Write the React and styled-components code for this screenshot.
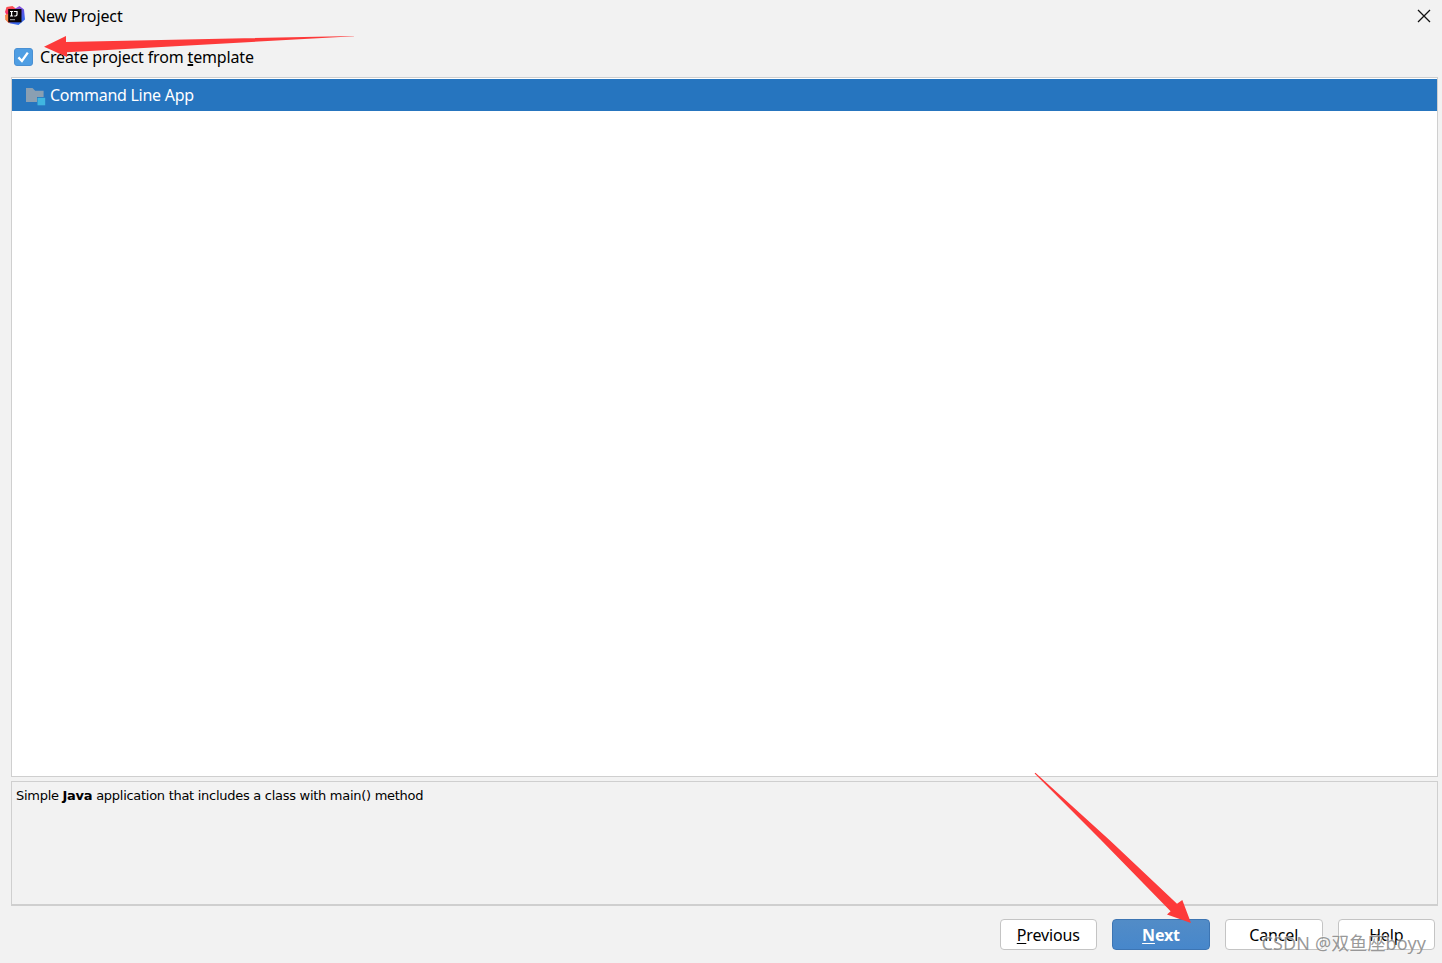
import { useState } from "react"
import styled, { createGlobalStyle } from "styled-components"

export default function App(){
    const [fromTemplate, setFromTemplate] = useState(true);
    return(
        <>
        <GlobalStyle/>
        <Dialog>
            <TitleBar>
                <Logo/>
                <Title>New Project</Title>
                <CloseButton aria-label="Close">
                    <svg width="14" height="14" viewBox="0 0 14 14">
                        <path d="M1 1L13 13M13 1L1 13" stroke="#111" strokeWidth="1.3" fill="none"/>
                    </svg>
                </CloseButton>
            </TitleBar>
            <TemplateToggle onClick={() => setFromTemplate(!fromTemplate)}>
                <CheckBox $checked={fromTemplate}>
                    {fromTemplate &&
                        <svg width="18" height="18" viewBox="0 0 18 18">
                            <path d="M4.4 9.4L7.9 13L13.8 4.6" stroke="#fff" strokeWidth="2.3" fill="none"/>
                        </svg>
                    }
                </CheckBox>
                <ToggleLabel>Create project from <u>t</u>emplate</ToggleLabel>
            </TemplateToggle>
            <TemplateList>
                <TemplateRow>
                    <FolderIcon/>
                    <span>Command Line App</span>
                </TemplateRow>
            </TemplateList>
            <Description>
                Simple <b>Java</b> application that includes a class with main() method
            </Description>
            <Footer>
                <Button><span><u>P</u>revious</span></Button>
                <Button $primary><span><u>N</u>ext</span></Button>
                <Button><span>Cancel</span></Button>
                <Button><span>Help</span></Button>
            </Footer>
            <Arrows/>
            <Watermark>CSDN @双鱼座boyy</Watermark>
        </Dialog>
        </>
    )
}

function Logo(){
    return(
        <svg width="20" height="20" viewBox="0 0 20 20">
            <defs>
                <linearGradient id="warm" x1="0.2" y1="0" x2="0.3" y2="1">
                    <stop offset="0" stopColor="#fb5a4a"/>
                    <stop offset="0.4" stopColor="#f82f6c"/>
                    <stop offset="1" stopColor="#e0407e"/>
                </linearGradient>
                <linearGradient id="cool" x1="0.3" y1="0" x2="0.7" y2="1">
                    <stop offset="0" stopColor="#a94fd6"/>
                    <stop offset="0.45" stopColor="#5a55e4"/>
                    <stop offset="1" stopColor="#2c6ff0"/>
                </linearGradient>
            </defs>
            <path d="M1.5 1L7.5 0L12 3.5L9 16L4 17L0.8 14L1.5 9L0 6Z" fill="url(#warm)"/>
            <path d="M9.5 3L14.5 0L19 3.5L20 13.5L13.5 19L4.5 17.3L9 12Z" fill="url(#cool)"/>
            <path d="M0 9L4 7.5V17L2.5 16L0.3 13.5Z" fill="#f98a4c"/>
            <rect x="3.2" y="3" width="13.3" height="13.3" fill="#0b0508"/>
            <path d="M5 5.5H8.2M6.6 5.5V10M5 10H8.2M9 5.5H12V8.6Q12 10 10.6 10H9.2" stroke="#fff" strokeWidth="1.2" fill="none"/>
            <path d="M5 13.7H10" stroke="#bbb" strokeWidth="0.9"/>
        </svg>
    )
}

function FolderIcon(){
    return(
        <svg width="20" height="18" viewBox="0 0 20 18">
            <path d="M0 0H6.5L9.2 2.7H17.6V9H11V14H0Z" fill="#8a9fb2"/>
            <rect x="11.5" y="9.8" width="7.7" height="7.5" fill="#40b6e0"/>
        </svg>
    )
}

function Arrows(){
    return(
        <ArrowLayer width="1442" height="963" viewBox="0 0 1442 963">
            <path d="M44 46.7L66 36V42L354 36V36.3L67 52.2V57Z" fill="#fd3a3a"/>
            <path d="M1034.6 773.4L1035.4 772.8L1110 840.5L1177 903.8L1182.3 900L1191 923L1167 914.5L1170.6 911.3L1100 839Z" fill="#fd3a3a"/>
        </ArrowLayer>
    )
}

const GlobalStyle = createGlobalStyle`
    *{
        box-sizing: border-box;
    }
    body{
        margin: 0;
        background: #f2f2f2;
        overflow: hidden;
    }
`
const Dialog = styled.div`
    position: relative;
    width: 1442px;
    height: 963px;
    display: flex;
    flex-direction: column;
    background: #f2f2f2;
    color: #000;
    font-family: "Noto Sans", "Noto Sans CJK SC", sans-serif;
    font-size: 16px;
    line-height: 20px;
`
const TitleBar = styled.div`
    height: 32px;
    display: flex;
    align-items: center;
    padding: 0 11px 0 5px;
`
const Title = styled.span`
    flex: 1;
    margin-left: 9px;
    letter-spacing: -0.12px;
`
const CloseButton = styled.button`
    display: flex;
    padding: 0;
    border: none;
    background: none;
`
const TemplateToggle = styled.div`
    height: 45px;
    display: flex;
    align-items: center;
    padding: 5px 0 0 14px;
`
const CheckBox = styled.span`
    display: flex;
    width: 18.5px;
    height: 18px;
    border-radius: 3px;
    border: 1px solid #4a90d3;
    background: ${props => props.$checked ? "#4f9ee3" : "#fff"};
    svg{
        margin: -1px;
    }
`
const ToggleLabel = styled.span`
    margin-left: 7.5px;
    letter-spacing: -0.15px;
    u{
        text-decoration-thickness: 2px;
        text-underline-offset: 1px;
        text-decoration-skip-ink: none;
    }
`
const TemplateList = styled.div`
    height: 700px;
    margin: 0 4px 0 11px;
    padding-top: 1px;
    border: 1px solid #cfcfcf;
    background: #fff;
`
const TemplateRow = styled.div`
    height: 32px;
    display: flex;
    align-items: center;
    padding-left: 14px;
    background: #2675bf;
    color: #fff;
    letter-spacing: -0.26px;
    svg{
        margin-top: 3px;
    }
    span{
        margin-left: 4px;
    }
`
const Description = styled.div`
    height: 125px;
    margin: 4px 4px 0 11px;
    padding: 4px;
    border: 1px solid #cfcfcf;
    border-bottom-width: 2px;
    font-family: "DejaVu Sans", sans-serif;
    font-size: 13px;
    letter-spacing: -0.28px;
`
const Footer = styled.div`
    display: flex;
    justify-content: flex-end;
    gap: 15px;
    padding: 13px 7px 0 0;
`
const Button = styled.button`
    width: ${props => props.$primary ? "98px" : "97.5px"};
    height: 31px;
    padding: 0;
    border: 1px solid ${props => props.$primary ? "#3d75b3" : "#c4c4c4"};
    border-radius: 4px;
    background: ${props => props.$primary ? "linear-gradient(#528cc7, #4787cb)" : "#fff"};
    color: ${props => props.$primary ? "#fff" : "#000"};
    font: inherit;
    font-weight: ${props => props.$primary ? 700 : 400};
    letter-spacing: -0.15px;
    u{
        text-decoration-thickness: 1px;
        text-underline-offset: 2px;
    }
`
const ArrowLayer = styled.svg`
    position: absolute;
    top: 0;
    left: 0;
    pointer-events: none;
`
const Watermark = styled.div`
    position: absolute;
    right: 16px;
    bottom: 8px;
    color: rgba(135, 135, 135, 0.85);
    text-shadow: -1px -1px 0 rgba(255, 255, 255, 0.5);
    font-size: 18px;
    letter-spacing: 0.12px;
    line-height: 24px;
    white-space: nowrap;
    pointer-events: none;
`
